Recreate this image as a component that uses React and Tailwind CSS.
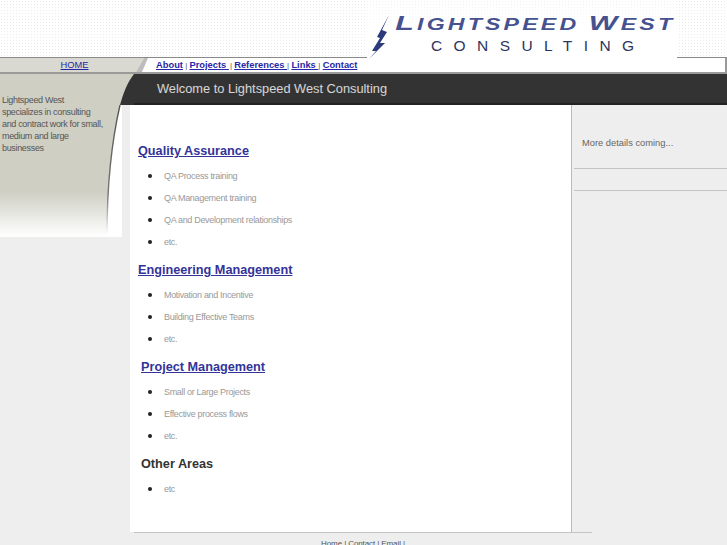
const Section = ({ title, items, link = true, x = 138, first = false }) => (
  <div>
    <h2 className={`h-[22px] leading-[22px] text-[12.7px] font-bold mb-[3px] ${first ? "" : "mt-[6px]"} ${link ? "text-[#333399] underline" : "text-[#333333]"} ${x === 141 ? "pl-[11px]" : "pl-[8px]"}`}>
      {title}
    </h2>
    <ul className="pl-[18px]">
      {items.map((t) => (
        <li key={t} className="h-[22px] flex items-center gap-[12px] text-[9px] tracking-[-0.33px] text-[#999999]">
          <span className="w-[4px] h-[4px] -mt-[1px] rounded-full bg-[#222222] shrink-0" />
          <span className="mt-[1px]">{t}</span>
        </li>
      ))}
    </ul>
  </div>
);

export default function App() {
  return (
    <div className="w-[727px] h-[545px] overflow-hidden bg-[#eeeeee] font-['Liberation_Sans',Arial,sans-serif]">
      {/* top band */}
      <header className="h-[57px] flex justify-end pr-[50px] bg-white bg-[radial-gradient(#ebebeb_1px,transparent_1px)] bg-[length:3px_3px]">
        <div className="relative z-10 w-[310px] h-[58px] flex bg-[linear-gradient(to_bottom,rgba(255,255,255,0.3),#ffffff_60%)]">
          <svg width="24" height="48" viewBox="0 0 24 48" className="mt-[13px] shrink-0 -mb-[4px]">
            <path d="M22 2 L10 24 L13 25 L5 38 L9 38 L2 46 L18 30 L13 30 L20 19 L15 17 Z" fill="#2d3a7c" />
          </svg>
          <div className="flex-1">
            <div className="mt-[11px] h-[24px] pl-[3px] leading-[24px] italic font-bold text-[#46528f] whitespace-nowrap tracking-[2.2px] text-[16px] origin-left scale-x-[1.445]">
              <span className="text-[21px]">L</span>IGHTSPEED <span className="text-[21px]">W</span>EST
            </div>
            <div className="pl-[40px] mt-[3px] h-[16px] leading-[16px] text-[15.5px] text-[#2d3560] tracking-[11.4px] whitespace-nowrap">CONSULTING</div>
          </div>
        </div>
      </header>

      {/* nav */}
      <nav className="h-[17px] flex border-t border-t-[#8a8a8a] border-r-2 border-r-[#999999] bg-white border-b-2 border-b-[#9a9a9a]">
        <div className="w-[133px] bg-[#d9d9d1] text-center text-[9.33px] leading-[14px] text-[#2626a8] underline pl-[15px]">
          <span className="ml-[1px]">HOME</span>
        </div>
        <svg width="15" height="14" viewBox="0 0 15 14" className="shrink-0">
          <path d="M0 0 H11 L3 14 H0 Z" fill="#d9d9d1" />
          <path d="M11 0 L3 14 H9 L15 0 Z" fill="#bdbdbd" />
        </svg>
        <div className="pl-[8px] text-[9.33px] leading-[14px] font-bold text-[#2626a8] whitespace-nowrap">
          <span className="underline">About</span>
          <span className="font-normal text-[#555555] text-[8px]"> | </span>
          <span className="underline">Projects </span>
          <span className="font-normal text-[#555555] text-[8px] pl-[1px]"> | </span>
          <span className="underline">References </span>
          <span className="font-normal text-[#555555] text-[8px]">| </span>
          <span className="underline">Links </span>
          <span className="font-normal text-[#555555] text-[8px]">| </span>
          <span className="underline">Contact</span>
        </div>
      </nav>

      {/* dark band */}
      <div className="h-[31px] flex">
        <div className="w-[120px] bg-[#cfcfc4]" />
        <svg width="14" height="31" viewBox="0 0 14 31" className="shrink-0">
          <rect width="14" height="31" fill="#cfcfc4" />
          <path d="M14 0 C7 9 3 20 0 31 H14 Z" fill="#333333" />
        </svg>
        <div className="flex-1 bg-[#333333] border-b-2 border-b-[#222222] text-white/80 text-[12.8px] leading-[29px] pl-[23px] whitespace-nowrap">
          Welcome to Lightspeed West Consulting
        </div>
      </div>

      {/* main */}
      <div className="flex h-[427px]">
        <aside className="w-[122px] h-[132px] relative bg-[linear-gradient(to_bottom,#cfcfc4_0%,#cfcfc4_66%,#ffffff_100%)] pl-[2px] text-[9px] tracking-[-0.33px] leading-[12px] text-[#555555]">
          <svg width="20" height="132" viewBox="0 0 20 132" className="absolute right-0 top-0">
            <defs>
              <linearGradient id="curve" x1="0" y1="0" x2="0" y2="1">
                <stop offset="0" stopColor="#555555" />
                <stop offset="0.7" stopColor="#777777" />
                <stop offset="1" stopColor="#ffffff" />
              </linearGradient>
            </defs>
            <path d="M18 0 C10 35 5 80 5 132 H20 V0 Z" fill="#ffffff" />
            <path d="M18 0 C10 35 5 80 5 130" fill="none" stroke="url(#curve)" strokeWidth="1.4" />
          </svg>
          <p className="w-[108px] mt-[-11px] relative">
            Lightspeed West<br />specializes in consulting<br />and contract work for small,<br />medium and large<br />businesses
          </p>
        </aside>

        <main className="ml-[8px] w-[441px] h-[427px] bg-white pt-[35px]">
          <Section first title="Quality Assurance" items={["QA Process training", "QA Management training", "QA and Development relationships", "etc."]} />
          <Section title="Engineering Management " items={["Motivation and Incentive", "Building Effective Teams", "etc."]} />
          <Section x={141} title="Project Management " items={["Small or Large Projects", "Effective process flows", "etc."]} />
          <Section x={141} link={false} title="Other Areas" items={["etc"]} />
        </main>

        <aside className="flex-1 border-l border-l-[#bbbbbb] pl-[2px] pt-[32px]">
          <p className="pl-[8px] h-[31px] text-[9.33px] leading-[12px] text-[#666666]">More details coming...</p>
          <div className="h-[22px] border-t border-t-[#c4c4c4]" />
          <div className="border-t border-t-[#c4c4c4]" />
        </aside>
      </div>

      {/* footer */}
      <footer className="ml-[134px] w-[458px] border-t border-t-[#c4c4c4] pt-[6px] text-center text-[8px] tracking-[-0.1px] leading-[10px] text-[#555555]">
        Home | Contact | Email |
      </footer>
    </div>
  );
}
